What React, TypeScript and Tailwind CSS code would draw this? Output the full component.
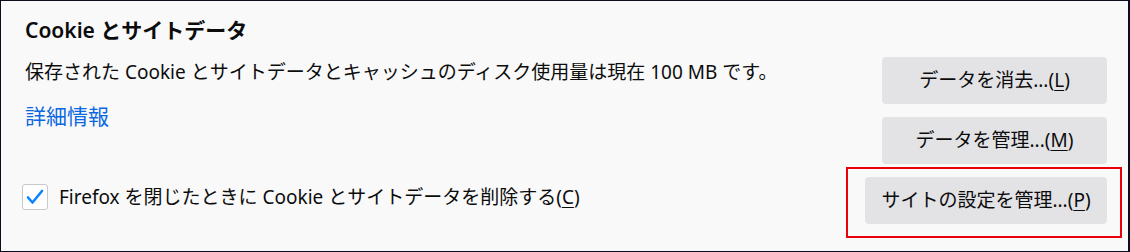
const font = {
  fontFamily: '"Noto Sans", "Noto Sans CJK JP", sans-serif',
};

function AccessKey({ label, letter }: { label: string; letter: string }) {
  return (
    <>
      {label}(<span className="underline underline-offset-[3px]">{letter}</span>)
    </>
  );
}

function PrefButton({ children, className = "" }: { children: React.ReactNode; className?: string }) {
  return (
    <button
      type="button"
      className={`h-[47px] rounded-[4px] bg-[#e3e3e6] text-[19px] text-[#0c0c0d] ${className}`}
    >
      {children}
    </button>
  );
}

export default function App() {
  return (
    <div
      className="h-[252px] w-[1130px] border border-r-2 border-[#0c0c1e] bg-[#f9f9fa] text-[#0c0c0d]"
      style={font}
    >
      <div className="relative pl-[24px] pr-[21px] pt-[14px]">
        <h2 className="text-[21px] font-semibold leading-[30px]">Cookie とサイトデータ</h2>

        <div className="mt-[12px] flex justify-between">
          <div className="pt-[2px]">
            <p className="text-[19px] leading-[26px]">
              保存された Cookie とサイトデータとキャッシュのディスク使用量は現在 100 MB です。
            </p>
            <a href="#" className="mt-[18px] block text-[21px] leading-[26px] text-[#0a68e0]">
              詳細情報
            </a>
          </div>
          <div className="flex w-[225px] flex-col gap-[13px]">
            <PrefButton>
              <AccessKey label="データを消去..." letter="L" />
            </PrefButton>
            <PrefButton>
              <AccessKey label="データを管理..." letter="M" />
            </PrefButton>
          </div>
        </div>

        <div className="mt-[13px] flex items-center justify-between">
          <label className="mb-[8px] flex items-center gap-[11px] text-[19px]">
            <span className="-ml-[3px] flex h-[26px] w-[26px] items-center justify-center rounded-[3px] border border-[#c8c8cc] bg-white">
              <svg width="18" height="16" viewBox="0 0 18 16" fill="none">
                <path
                  d="M2 8.5 L6.5 13.5 L16 2"
                  stroke="#0a84ff"
                  strokeWidth="2.6"
                  strokeLinecap="round"
                  strokeLinejoin="round"
                />
              </svg>
            </span>
            <span className="leading-[26px]">
              <AccessKey label="Firefox を閉じたときに Cookie とサイトデータを削除する" letter="C" />
            </span>
          </label>
          <PrefButton className="w-[242px]">
            <AccessKey label="サイトの設定を管理..." letter="P" />
          </PrefButton>
        </div>

        <div className="pointer-events-none absolute left-[845px] top-[166px] h-[71px] w-[276px] border-2 border-[#e8000b]" />
      </div>
    </div>
  );
}
